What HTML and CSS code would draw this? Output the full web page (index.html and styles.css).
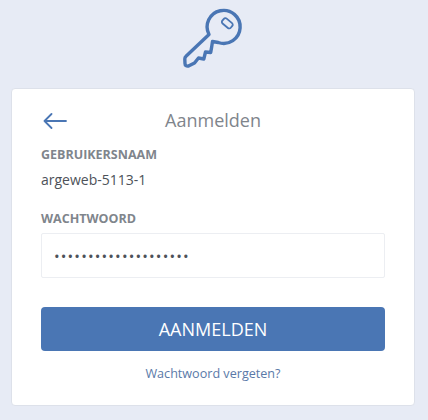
FILE: index.html
```html
<!DOCTYPE html>
<html lang="nl">
<head>
<meta charset="utf-8">
<title>Aanmelden</title>
<link rel="stylesheet" href="styles.css">
</head>
<body>
<div class="logo">
  <svg class="key" width="64" height="70" viewBox="0 0 64 70" fill="none" stroke="#4a76b4" stroke-width="3.400" stroke-linejoin="round" stroke-linecap="round">
    <path d="M28 34.500A16.500 16.500 0 1 1 37.300 42.500L31.500 41.500L30.700 46.700L29.700 52.500L24.500 52L22.800 59L17.500 58L13.500 63L7.500 66C5.500 66.500 4 65.500 4 63.500L3.800 59C3.800 57.800 4.200 57 5 56.300Z"/>
    <rect x="-5.500" y="-3.200" width="11" height="6.400" rx="2" transform="translate(46.300 23.300) rotate(40)" stroke-width="1.800"/>
  </svg>
</div>
<main class="card">
  <header class="card-head">
    <a class="back" href="#" aria-label="Terug">
      <svg width="24" height="16" viewBox="0 0 24 16" fill="none" stroke="#4a76b4" stroke-width="1.800" stroke-linecap="round" stroke-linejoin="round">
        <path d="M8.500 1L1.500 8L8.500 15M1.500 8H23"/>
      </svg>
    </a>
    <h1 class="title">Aanmelden</h1>
  </header>
  <div class="label label-user">GEBRUIKERSNAAM</div>
  <div class="value">argeweb-5113-1</div>
  <div class="label label-pass">WACHTWOORD</div>
  <div class="field">••••••••••••••••••••</div>
  <button class="submit" type="button">AANMELDEN</button>
  <a class="forgot" href="#">Wachtwoord vergeten?</a>
</main>
</body>
</html>
```
FILE: styles.css
```css
* { box-sizing: border-box; }
html, body { margin: 0; padding: 0; }
body {
  width: 428px;
  height: 420px;
  overflow: hidden;
  background: #e7ebf5;
  font-family: "Open Sans", sans-serif;
  color: #4d5259;
  padding: 0 13px 0 11px;
}
.logo {
  height: 88px;
  display: flex;
  justify-content: center;
}
.card {
  width: 404px;
  height: 318px;
  background: #fff;
  border: 1px solid #dde1ea;
  border-radius: 4px;
  padding: 0 29px;
  display: flex;
  flex-direction: column;
}
.card-head {
  height: 58px;
  display: flex;
  align-items: center;
  justify-content: center;
  position: relative;
  padding-top: 4px;
}
.back {
  position: absolute;
  left: 2px;
  top: 24px;
  display: block;
  line-height: 0;
}
.title {
  margin: 0;
  font-size: 18px;
  font-weight: 400;
  color: #7f858c;
}
.label {
  font-size: 12.500px;
  font-weight: 700;
  color: #7f858c;
  line-height: 16px;
}
.value {
  font-size: 14px;
  line-height: 20px;
  margin-top: 7px;
}
.label-pass { margin-top: 21px; }
.field {
  height: 45px;
  margin-top: 6px;
  border: 1px solid #eceef2;
  border-radius: 2px;
  padding-left: 12px;
  display: flex;
  align-items: center;
  font-size: 15px;
  letter-spacing: 1.150px;
  color: #4d5259;
}
.submit {
  height: 44px;
  margin-top: 29px;
  border: 0;
  border-radius: 4px;
  background: #4a76b4;
  color: #fff;
  font-family: inherit;
  font-size: 18px;
  font-weight: 400;
}
.forgot {
  margin-top: 14px;
  text-align: center;
  font-size: 12.600px;
  line-height: 18px;
  color: #5a79a8;
  text-decoration: none;
}
```
